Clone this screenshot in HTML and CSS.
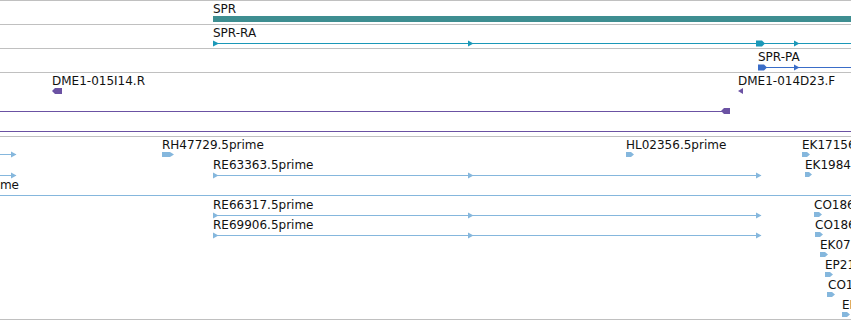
FILE: index.html
```html
<!DOCTYPE html>
<html lang="en">
    <head>
        <meta charset="UTF-8">
        <meta name="viewport" content="width=device-width, initial-scale=1.0">
        <title>SPR region</title>
        <link rel="stylesheet" href="styles.css">
    </head>
    <body>
        <div class="browser">
            <!-- Gene track -->
            <div class="track track-short">
                <svg width="851" height="23" viewBox="0 1 851 23">
                    <text class="label" x="213" y="13">SPR</text>
                    <rect class="gene" x="213" y="16" width="638" height="6"/>
                </svg>
            </div>

            <!-- Transcript SPR-RA -->
            <div class="track track-short">
                <svg width="851" height="23" viewBox="0 25 851 23">
                    <text class="label" x="213" y="37">SPR-RA</text>
                    <rect class="ra line" x="213" y="43" width="638" height="1"/>
                    <polygon class="ra" points="213,40.5 219,43.5 213,46.5"/>
                    <polygon class="ra" points="468,40.5 473.5,43.5 468,46.5"/>
                    <polygon class="ra" points="756,40.5 762,40.5 765,43.5 762,46.5 756,46.5"/>
                    <polygon class="ra" points="794,40.5 799.5,43.5 794,46.5"/>
                </svg>
            </div>

            <!-- Transcript SPR-PA -->
            <div class="track track-short">
                <svg width="851" height="23" viewBox="0 49 851 23">
                    <text class="label" x="758" y="61">SPR-PA</text>
                    <rect class="pa line" x="758" y="67" width="93" height="1"/>
                    <polygon class="pa" points="758,64.5 764,64.5 767,67.5 764,70.5 758,70.5"/>
                    <polygon class="pa" points="794,64.5 799.5,67.5 794,70.5"/>
                </svg>
            </div>

            <!-- EST / BAC ends -->
            <div class="track track-mid">
                <svg width="851" height="63" viewBox="0 73 851 63">
                    <text class="label" x="52" y="85">DME1-015I14.R</text>
                    <polygon class="est" points="52,91 55,88 62,88 62,94 55,94"/>
                    <text class="label" x="738" y="85">DME1-014D23.F</text>
                    <polygon class="est" points="738,91 743,88 743,94"/>
                    <rect class="est line" x="0" y="111" width="722" height="1"/>
                    <polygon class="est" points="721,111 724,108 730,108 730,114 724,114"/>
                    <rect class="est line" x="0" y="131" width="851" height="1"/>
                </svg>
            </div>

            <!-- cDNA 5prime reads -->
            <div class="track track-tall">
                <svg width="851" height="182" viewBox="0 137 851 182">
                    <!-- row 1 -->
                    <rect class="cdna line" x="0" y="154" width="16" height="1"/>
                    <polygon class="cdna" points="11,151.5 16.5,154.5 11,157.5"/>
                    <text class="label" x="162" y="149">RH47729.5prime</text>
                    <polygon class="cdna" points="162,152 170,152 174,154.5 170,157 162,157"/>
                    <text class="label" x="626" y="149">HL02356.5prime</text>
                    <polygon class="cdna" points="626,152 631,152 634,154.5 631,157 626,157"/>
                    <text class="label" x="802" y="149">EK171562.5prime</text>
                    <polygon class="cdna" points="802,152 807,152 810,154.5 807,157 802,157"/>

                    <!-- row 2 -->
                    <rect class="cdna line" x="0" y="175" width="16" height="1"/>
                    <polygon class="cdna" points="11,172.5 16.5,175.5 11,178.5"/>
                    <text class="label" x="213" y="169">RE63363.5prime</text>
                    <rect class="cdna line" x="213" y="175" width="548" height="1"/>
                    <polygon class="cdna" points="213,172.5 218.5,175.5 213,178.5"/>
                    <polygon class="cdna" points="468,172.5 473.5,175.5 468,178.5"/>
                    <polygon class="cdna" points="756,172.5 761.5,175.5 756,178.5"/>
                    <text class="label" x="805" y="169">EK198467.5prime</text>
                    <polygon class="cdna" points="805,172 809,172 812,174.5 809,177 805,177"/>

                    <!-- row 3 -->
                    <text class="label" x="19" y="189" text-anchor="end">RE06193.5prime</text>
                    <rect class="cdna line" x="0" y="195" width="851" height="1"/>

                    <!-- row 4 -->
                    <text class="label" x="213" y="209">RE66317.5prime</text>
                    <rect class="cdna line" x="213" y="215" width="548" height="1"/>
                    <polygon class="cdna" points="213,212.5 218.5,215.5 213,218.5"/>
                    <polygon class="cdna" points="468,212.5 473.5,215.5 468,218.5"/>
                    <polygon class="cdna" points="756,212.5 761.5,215.5 756,218.5"/>
                    <text class="label" x="814" y="209">CO18661.5prime</text>
                    <polygon class="cdna" points="814,212 819,212 822,214.5 819,217 814,217"/>

                    <!-- row 5 -->
                    <text class="label" x="213" y="229">RE69906.5prime</text>
                    <rect class="cdna line" x="213" y="235" width="548" height="1"/>
                    <polygon class="cdna" points="213,232.5 218.5,235.5 213,238.5"/>
                    <polygon class="cdna" points="468,232.5 473.5,235.5 468,238.5"/>
                    <polygon class="cdna" points="756,232.5 761.5,235.5 756,238.5"/>
                    <text class="label" x="815" y="229">CO18603.5prime</text>
                    <polygon class="cdna" points="815,232 820,232 823,234.5 820,237 815,237"/>

                    <!-- stacked reads at the right edge -->
                    <text class="label" x="820" y="249">EK077421.5prime</text>
                    <polygon class="cdna" points="820,252 825,252 828,254.5 825,257 820,257"/>
                    <text class="label" x="825" y="269">EP2134.5prime</text>
                    <polygon class="cdna" points="825,272 830,272 833,274.5 830,277 825,277"/>
                    <text class="label" x="828" y="289">CO10427.5prime</text>
                    <polygon class="cdna" points="827,292 832,292 835,294.5 832,297 827,297"/>
                    <text class="label" x="842" y="309">EK09811.5prime</text>
                    <polygon class="cdna" points="842,312 847,312 850,314.5 847,317 842,317"/>
                </svg>
            </div>
        </div>
    </body>
</html>
```

FILE: styles.css
```css
/* Page reset */
html, body {
    margin: 0;
    padding: 0;
    background-color: #fff;
    overflow: hidden;
}

/* The browser canvas */
.browser {
    width: 851px;
    font-family: "DejaVu Sans", Verdana, sans-serif;
}

/* Each track is separated by a thin grey rule */
.track {
    border-top: 1px solid #c0c0c0;
}

.track:last-child {
    border-bottom: 1px solid #c0c0c0;
}

.track svg {
    display: block;
    overflow: hidden;
}

.track-short {
    height: 23px;
}

.track-mid {
    height: 63px;
}

.track-tall {
    height: 182px;
}

/* Feature labels */
.label {
    font-family: "DejaVu Sans", Verdana, sans-serif;
    font-size: 12px;
    fill: #111;
}

/* Feature glyphs */
.line {
    shape-rendering: crispEdges;
}

.gene {
    fill: #3e8e91;
    shape-rendering: crispEdges;
}

.ra {
    fill: #1b98b8;
}

.pa {
    fill: #3a6dc8;
}

.est {
    fill: #6b52a3;
}

.cdna {
    fill: #85b7dd;
}
```
